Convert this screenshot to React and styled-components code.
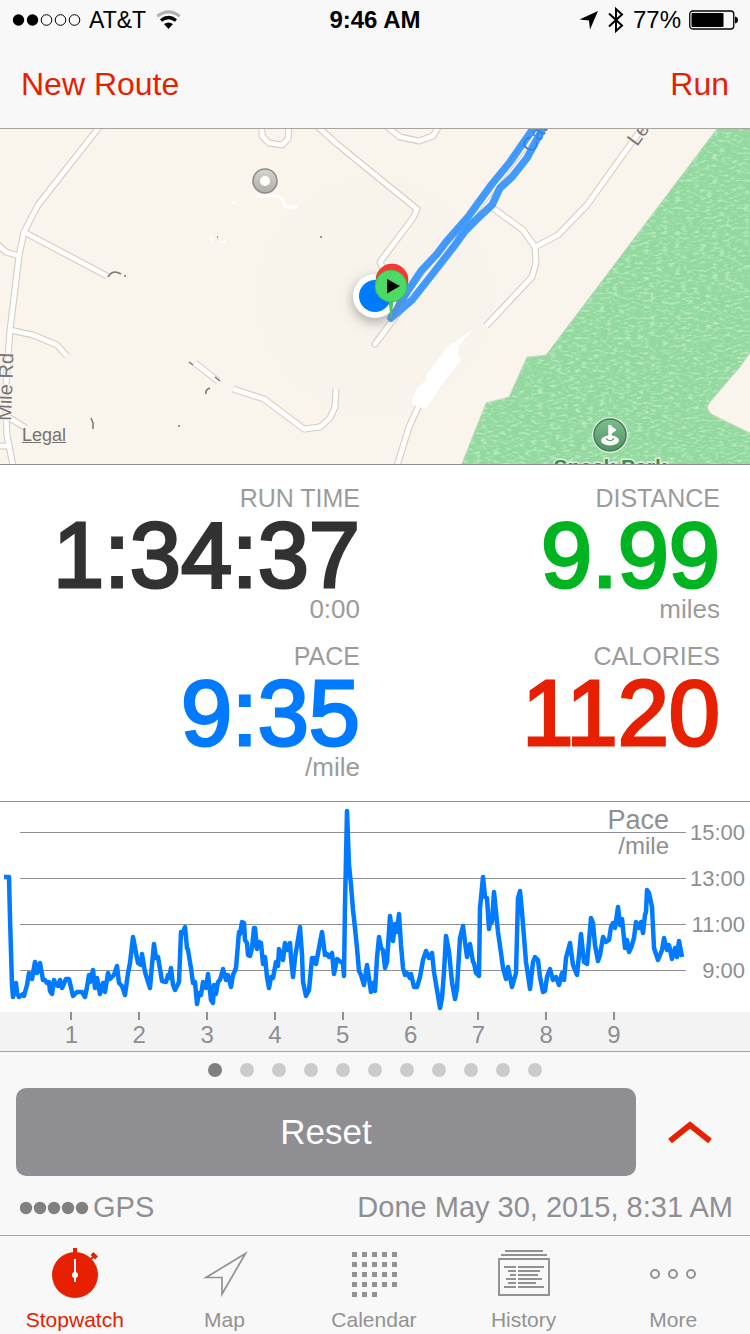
import React, { useState } from 'react'
import styled, { createGlobalStyle, css } from 'styled-components'

const RED = '#e62000'
const BLUE = '#007aff'
const GREY = '#8e8e93'

const GlobalStyle = createGlobalStyle`
  * {
    box-sizing: border-box;
  }
  body {
    margin: 0;
    background-color: #f8f8f8;
    font-family: "Liberation Sans", Arial, sans-serif;
  }
  button {
    padding: 0;
    border: 0;
    background: none;
    font-family: inherit;
    cursor: pointer;
  }
`

const Container = styled.div`
  display: flex;
  flex-direction: column;
  min-height: 100vh;
`

const StatusBar = styled.div`
  display: grid;
  grid-template-columns: 1fr auto 1fr;
  align-items: center;
  height: 40px;
  padding: 0 12px;
  color: black;
  font-size: 24px;
  & > .time {
    font-weight: bold;
  }
`

const StatusGroup = styled.div`
  display: flex;
  align-items: center;
  gap: ${props => props.$end ? '8px' : '10px'};
  ${props => props.$end && css`
    justify-content: flex-end;
  `}
  & > .carrier {
    display: flex;
    align-items: center;
    gap: 8px;
    font-size: 23px;
  }
`

const NavBar = styled.div`
  display: flex;
  justify-content: space-between;
  align-items: center;
  height: 89px;
  padding: 0 21px;
  border-bottom: 1px solid #a9a59e;
`

const NavButton = styled.button`
  color: ${RED};
  font-size: 32px;
  line-height: 40px;
`

const MapPanel = styled.div`
  position: relative;
  height: 336px;
  border-bottom: 1px solid ${GREY};
  & > svg {
    display: block;
    width: 100%;
    height: 100%;
  }
`

const LegalLink = styled.a`
  position: absolute;
  left: 22px;
  bottom: 18px;
  color: #76736e;
  font-size: 18px;
  line-height: 22px;
`

const Stats = styled.div`
  display: grid;
  grid-template-columns: 1fr 1fr;
  row-gap: 16px;
  padding: 16px 0 20px;
  background-color: white;
  border-bottom: 1px solid ${GREY};
`

const Stat = styled.div`
  display: flex;
  flex-direction: column;
  align-items: flex-end;
  padding-right: ${props => props.$last ? '30px' : '15px'};
  color: #9b9b9b;
  & > .label {
    font-size: 25px;
    line-height: 34px;
  }
  & > .value {
    color: ${props => props.color};
    font-size: 92px;
    line-height: 80px;
    -webkit-text-stroke: 3px ${props => props.color};
  }
  & > .unit {
    font-size: 26px;
    line-height: 28px;
  }
`

const Chart = styled.div`
  position: relative;
  display: flex;
  height: 210px;
  background-color: white;
  & > svg {
    flex: 1;
    min-width: 0;
    height: 210px;
  }
`

const ChartTitle = styled.div`
  position: absolute;
  top: 4px;
  right: 81px;
  color: ${GREY};
  text-align: right;
  font-size: 27px;
  line-height: 28px;
  & > .unit {
    font-size: 24px;
    line-height: 24px;
  }
`

const ScaleLabels = styled.div`
  width: 64px;
  padding: 8px 5px 0 0;
  color: ${GREY};
  text-align: right;
  font-size: 22px;
  line-height: 46px;
`

const MileAxis = styled.div`
  display: flex;
  height: 40px;
  padding-left: 5%;
  background-color: #f3f3f3;
  border-bottom: 1px solid #a4a4a8;
`

const Mile = styled.div`
  display: flex;
  flex-direction: column;
  align-items: center;
  width: 9.52%;
  color: ${GREY};
  font-size: 24px;
  line-height: 30px;
  &::before {
    content: '';
    width: 2px;
    height: 8px;
    background-color: ${GREY};
  }
`

const PageDots = styled.div`
  display: flex;
  justify-content: center;
  align-items: center;
  gap: 18px;
  height: 36px;
`

const PageDot = styled.button`
  width: 14px;
  height: 14px;
  border-radius: 50%;
  background-color: ${props => props.$active ? '#808080' : '#cbcbcb'};
`

const Actions = styled.div`
  display: flex;
  gap: 10px;
  padding: 0 16px;
`

const ResetButton = styled.button`
  flex: 1;
  height: 88px;
  border-radius: 10px;
  background-color: ${GREY};
  color: white;
  font-size: 35px;
`

const ToggleButton = styled.button`
  display: flex;
  justify-content: center;
  align-items: center;
  width: 88px;
`

const InfoRow = styled.div`
  display: flex;
  justify-content: space-between;
  align-items: center;
  height: 60px;
  padding: 4px 17px 0 20px;
  border-bottom: 1px solid #a4a4a8;
  color: ${GREY};
  font-size: 29px;
`

const Signal = styled.div`
  display: flex;
  align-items: center;
  gap: 4px;
`

const TabBar = styled.nav`
  display: flex;
  padding: 12px 2px 0 0;
`

const Tab = styled.button`
  flex: 1;
  display: flex;
  flex-direction: column;
  align-items: center;
  gap: 7px;
  color: ${props => props.$active ? RED : '#929292'};
  font-size: 21px;
  line-height: 26px;
`

const roads = [
  'M100 126L38 205L24 232L19 256L10 330L5 400L7 435L13 466',
  'M24 232L107 276',
  'M-2 245L6 252L19 256',
  'M10 330L33 335L57 345L67 356',
  'M8 417L26 428',
  'M-2 446L8 446',
  'M262 126L262 136L269 143L282 145L288 139L289 126',
  'M317 126L337 144L375 175L417 209L413 218L380 262L386 275',
  'M386 126L400 137L419 141L433 136L439 126',
  'M645 124L587 205L558 235L535 247L536 263L532 277L486 326',
  'M490 206L523 230L535 247',
  'M375 344L405 304L540 126',
  'M420 403L409 427L397 466',
  'M233 389L264 399L304 429L320 427L330 418L335 407L336 389',
  'M195 363L218 381',
]

const routes = [
  'M535 126L510 162L492 184L468 217L446 242L437 254L421 271L407 292L391 318',
  'M544 126L527 158L512 177L500 188L492 205L478 218L465 231L455 245L434 272L412 300L391 318',
]

const park = 'M719 126L546 355L527 357L509 397L486 403L461 466L752 466L752 434L713 415Q704 409 710 402L740 367L752 350L752 126Z'

const pace = [
  [4, 75], [9, 75], [10, 116], [12, 183], [13, 195], [16, 181], [17, 191], [19, 195], [23, 192], [24, 194],
  [27, 183], [29, 171], [32, 177], [35, 160], [37, 171], [40, 161], [43, 178], [45, 178], [47, 181], [49, 180],
  [50, 189], [52, 192], [54, 178], [56, 183], [58, 184], [60, 178], [62, 186], [66, 177], [69, 177], [73, 194],
  [77, 190], [82, 190], [85, 195], [87, 185], [89, 173], [90, 180], [93, 168], [95, 186], [97, 176], [100, 192],
  [103, 181], [105, 190], [108, 171], [110, 177], [114, 173], [117, 164], [119, 181], [122, 184], [125, 193],
  [128, 171], [130, 161], [133, 135], [136, 151], [138, 161], [141, 163], [142, 152], [145, 170], [150, 186],
  [152, 163], [154, 142], [156, 156], [158, 155], [162, 179], [166, 180], [168, 173], [169, 176], [171, 166],
  [173, 183], [175, 188], [179, 180], [181, 130], [183, 131], [185, 125], [187, 146], [188, 148], [191, 166],
  [193, 181], [195, 180], [197, 202], [199, 191], [201, 193], [203, 180], [206, 186], [208, 172], [211, 198],
  [213, 201], [214, 183], [216, 192], [218, 180], [220, 178], [223, 167], [226, 178], [228, 173], [231, 185],
  [233, 173], [236, 166], [239, 130], [240, 132], [242, 120], [244, 121], [245, 138], [247, 141], [248, 153],
  [250, 154], [252, 146], [254, 126], [255, 126], [257, 147], [259, 140], [261, 141], [263, 162], [265, 155],
  [267, 175], [269, 186], [271, 175], [273, 176], [276, 160], [278, 164], [279, 147], [283, 158], [285, 141],
  [287, 148], [290, 141], [291, 156], [293, 175], [295, 156], [300, 125], [302, 153], [303, 180], [306, 194],
  [309, 188], [312, 156], [314, 156], [316, 162], [319, 146], [322, 130], [325, 153], [327, 152], [329, 155],
  [332, 151], [334, 172], [337, 157], [341, 160], [343, 162], [344, 174], [345, 103], [347, 9], [349, 63],
  [351, 83], [353, 108], [355, 126], [357, 146], [359, 169], [361, 173], [364, 183], [367, 163], [371, 190],
  [373, 181], [375, 189], [377, 156], [379, 135], [381, 146], [383, 148], [385, 166], [387, 160], [390, 114],
  [393, 139], [395, 122], [397, 130], [399, 112], [401, 143], [403, 166], [405, 173], [407, 171], [410, 176],
  [411, 172], [414, 185], [417, 185], [420, 175], [423, 158], [426, 149], [429, 156], [432, 151], [434, 170],
  [437, 188], [440, 206], [442, 196], [444, 170], [446, 134], [449, 150], [452, 180], [455, 197], [457, 186],
  [460, 136], [463, 124], [465, 140], [467, 155], [470, 142], [473, 160], [474, 161], [476, 171], [479, 174],
  [480, 106], [483, 75], [485, 95], [487, 96], [489, 127], [491, 115], [492, 120], [494, 90], [496, 110],
  [498, 130], [501, 151], [503, 166], [506, 177], [508, 165], [512, 185], [516, 171], [518, 96], [520, 89],
  [522, 110], [526, 160], [528, 173], [530, 187], [533, 160], [535, 155], [538, 158], [540, 175], [543, 190],
  [545, 189], [547, 175], [550, 167], [553, 178], [556, 175], [559, 183], [562, 171], [564, 178], [566, 156],
  [570, 141], [573, 163], [577, 173], [579, 153], [581, 132], [584, 160], [587, 162], [591, 116], [593, 121],
  [595, 143], [598, 159], [600, 153], [603, 135], [606, 140], [609, 138], [611, 125], [613, 121], [615, 126],
  [618, 105], [620, 123], [622, 117], [625, 146], [627, 138], [629, 150], [631, 146], [634, 136], [636, 120],
  [639, 126], [641, 120], [643, 131], [645, 113], [646, 110], [647, 88], [649, 91], [652, 105], [654, 146],
  [658, 158], [662, 148], [664, 136], [667, 148], [669, 143], [672, 157], [675, 146], [677, 155], [679, 139],
  [682, 155],
]

const stats = [
  { label: 'RUN TIME', value: '1:34:37', unit: '0:00', color: '#323232' },
  { label: 'DISTANCE', value: '9.99', unit: 'miles', color: '#00b421' },
  { label: 'PACE', value: '9:35', unit: '/mile', color: BLUE },
  { label: 'CALORIES', value: '1120', unit: '', color: RED },
]

const SignalDots = ({ filled }) => (
  <svg width="69" height="14">
    {[0, 1, 2, 3, 4].map(i => (
      <circle key={i} cx={6.5 + i * 14} cy="7" r={i < filled ? 5.7 : 5.3} fill={i < filled ? 'black' : 'none'} stroke="black" strokeWidth={i < filled ? 0 : 1} />
    ))}
  </svg>
)

const WifiIcon = () => (
  <svg width="25" height="20" viewBox="0 0 25 20" fill="none">
    <path d="M1.2 6.200Q12.500 -2.500 23.800 6.200" stroke="#b0b0b0" strokeWidth="3" />
    <path d="M5 10.500Q12.500 4.500 20 10.500" stroke="black" strokeWidth="3.200" />
    <path d="M12.500 19L8 14Q12.500 10.800 17 14Z" fill="black" />
  </svg>
)

const LocationIcon = () => (
  <svg width="20" height="20" viewBox="0 0 20 20">
    <path d="M19 1L0.500 9.500L10 10.400L11 19.500Z" fill="black" />
  </svg>
)

const BluetoothIcon = () => (
  <svg width="18" height="28" viewBox="0 0 18 28" fill="none" stroke="black" strokeWidth="2">
    <path d="M2 7.500L15 19.500L9 25V3L15 8.500L2 20.500" />
  </svg>
)

const BatteryIcon = () => (
  <svg width="49" height="20" viewBox="0 0 49 20">
    <rect x="0.750" y="1" width="44" height="18" rx="3" fill="none" stroke="black" strokeWidth="1.300" />
    <rect x="2.500" y="3" width="32" height="14" rx="1" fill="black" />
    <path d="M46 6.500Q49 7 49 10Q49 13 46 13.500Z" fill="black" />
  </svg>
)

const StopwatchIcon = () => (
  <svg width="52" height="52" viewBox="0 0 52 52">
    <circle cx="26" cy="27" r="23" fill={RED} />
    <path d="M24 0H28V6H24Z" fill={RED} />
    <path d="M42 11L45 8" stroke={RED} strokeWidth="2" />
    <path d="M43 5.500L47.500 10" stroke={RED} strokeWidth="4" />
    <path d="M26 11V34" stroke="white" strokeWidth="2" />
    <circle cx="26" cy="27" r="3" fill="white" />
  </svg>
)

const MapIcon = () => (
  <svg width="52" height="52" viewBox="0 0 52 52">
    <path d="M47.500 5.500L8 29.500H24V46Z" fill="none" stroke="#929292" strokeWidth="1.700" strokeMiterlimit="10" />
  </svg>
)

const CalendarIcon = () => (
  <svg width="52" height="52" viewBox="0 0 52 52" fill="#929292">
    {Array.from({ length: 23 }, (_, i) => (
      <rect key={i} x={4 + (i % 5) * 10} y={4 + Math.floor(i / 5) * 10} width="5" height="5" />
    ))}
  </svg>
)

const HistoryIcon = () => (
  <svg width="52" height="52" viewBox="0 0 52 52" fill="none" stroke="#929292" strokeWidth="2">
    <path d="M7 3H45M3 7H49" />
    <rect x="1" y="11" width="50" height="36" />
    <path d="M6 19H18M10 23H18M12 27H18M8 31H18M10 35H18M6 39H18" />
    <path d="M20 19H46M20 23H42M20 27H40M20 31H44M20 35H38M20 39H46" />
  </svg>
)

const MoreIcon = () => (
  <svg width="52" height="52" viewBox="0 0 52 52" fill="none" stroke="#929292" strokeWidth="2">
    <circle cx="8" cy="26" r="4" />
    <circle cx="26" cy="26" r="4" />
    <circle cx="44" cy="26" r="4" />
  </svg>
)

const tabs = [
  { name: 'Stopwatch', Icon: StopwatchIcon },
  { name: 'Map', Icon: MapIcon },
  { name: 'Calendar', Icon: CalendarIcon },
  { name: 'History', Icon: HistoryIcon },
  { name: 'More', Icon: MoreIcon },
]

const RouteMap = () => (
  <svg viewBox="0 129 750 335" preserveAspectRatio="xMidYMid slice">
    <defs>
      <filter id="grass" x="0" y="0" width="100%" height="100%" colorInterpolationFilters="sRGB">
        <feTurbulence type="fractalNoise" baseFrequency="0.16 0.4" numOctaves="3" seed="4" />
        <feColorMatrix values="0 0 0 0 0.72  0 0 0 0 0.92  0 0 0 0 0.75  3.500 0 0 0 -1.700" />
      </filter>
      <filter id="glow" x="-50%" y="-50%" width="200%" height="200%">
        <feGaussianBlur stdDeviation="6" />
      </filter>
      <clipPath id="park">
        <path d={park} />
      </clipPath>
      <linearGradient id="silver" x1="0" y1="0" x2="0" y2="1">
        <stop offset="0" stopColor="#d6d4cf" />
        <stop offset="1" stopColor="#b0aea8" />
      </linearGradient>
      <linearGradient id="golf" x1="0" y1="0" x2="0" y2="1">
        <stop offset="0" stopColor="#7dbd8d" />
        <stop offset="1" stopColor="#4f9463" />
      </linearGradient>
    </defs>
    <rect y="129" width="750" height="335" fill="#f9f5ed" />
    <path d={park} fill="#93d99f" stroke="#cfd6c0" />
    <g clipPath="url(#park)">
      <rect x="455" y="129" width="295" height="335" filter="url(#grass)" />
    </g>
    <circle cx="375" cy="296" r="118" fill="#8c8c78" fillOpacity="0.012" />
    <g fill="none" strokeLinejoin="round">
      {roads.map(d => <path key={d} d={d} stroke="#d6cdc2" strokeWidth="7" />)}
      {roads.map(d => <path key={d} d={d} stroke="white" strokeWidth="4.800" />)}
      <path d="M375 344L380 337" stroke="#d6cdc2" strokeWidth="7" strokeLinecap="round" />
      <path d="M375 344L382 335" stroke="white" strokeWidth="4.800" strokeLinecap="round" />
      <path d="M257 196H276Q284 197 285 207H297" stroke="white" strokeWidth="3" />
      <path d="M210 237l3 4M220 242h6M232 203l4 -1" stroke="white" strokeWidth="2" />
      <path d="M108 277Q112 269 121 274M124 276h2M91 418l2 5v6M178 426h2M189 362l4 3M215 377l5 4M210 388q-5 2 -4 6M320 237h2M217 237h1" stroke="#77756f" strokeWidth="1.500" />
    </g>
    <path d="M474 329L459 345L458 352L460 361L441 386L426 409L413 405L412 399L418 387L427 380L426 375L449 345L455 342Z" fill="white" />
    <g fill="#77757a" fontSize="20" stroke="#f9f5ed" strokeWidth="2" paintOrder="stroke">
      <text transform="translate(11 421) rotate(-88)">Mile Rd</text>
      <text transform="translate(637 147) rotate(-54)">Le</text>
      <text transform="translate(532 154) rotate(-57)">Can</text>
    </g>
    <g fill="none" stroke="#1c86ff" strokeOpacity="0.820" strokeWidth="7.500" strokeLinejoin="round" strokeLinecap="round">
      <path d={routes.join('')} />
    </g>
    <circle cx="265" cy="181" r="12" fill="url(#silver)" stroke="#8d8b87" strokeWidth="1.500" />
    <circle cx="265" cy="181" r="5" fill="white" />
    <circle cx="610" cy="435" r="18" fill="#dff0df" />
    <circle cx="610" cy="435" r="16" fill="url(#golf)" stroke="#457d55" strokeWidth="1.500" />
    <ellipse cx="610" cy="440.500" rx="9" ry="5" fill="white" />
    <path d="M609 440V425L616 430L611 433.500V440Z" fill="white" stroke="white" />
    <path d="M606 438.500Q610 443 614 438.500" fill="none" stroke="#5d9f70" strokeWidth="1.200" />
    <path d="M610 425V440" stroke="white" strokeWidth="3" />
    <text x="610" y="474" textAnchor="middle" fontSize="21" fontWeight="bold" fill="#3f8a55" stroke="#dff2df" strokeWidth="3" paintOrder="stroke">Speck Park</text>
    <circle cx="375" cy="300" r="23" fill="#777" fillOpacity="0.550" filter="url(#glow)" />
    <circle cx="375" cy="296" r="22" fill="white" />
    <circle cx="375" cy="296" r="16" fill={BLUE} />
    <circle cx="392" cy="280" r="16" fill="#ff3530" stroke="#d8322c" strokeWidth="0.800" />
    <path d="M388.500 300H393.500L391.500 318H390.500Z" fill="#46c95d" />
    <circle cx="391" cy="286" r="16" fill="#4cd964" stroke="#3fae52" strokeWidth="0.800" />
    <path d="M387 279L400 286L387 293.500Z" fill="black" />
  </svg>
)

export default function App() {
  const [page, setPage] = useState(0)
  const [tab, setTab] = useState('Stopwatch')

  const renderStatusBar = () => {
    return <StatusBar>
      <StatusGroup>
        <span className="carrier">
          <SignalDots filled={2} />
          AT&amp;T
        </span>
        <WifiIcon />
      </StatusGroup>
      <span className="time">9:46 AM</span>
      <StatusGroup $end>
        <LocationIcon />
        <BluetoothIcon />
        <span>77%</span>
        <BatteryIcon />
      </StatusGroup>
    </StatusBar>
  }

  const renderChart = () => {
    return <>
      <Chart>
        <svg viewBox="0 0 686 210" preserveAspectRatio="none">
          <path d="M20 30.500H686M20 76.500H686M20 122.500H686M20 168.500H686" stroke={GREY} vectorEffect="non-scaling-stroke" />
          <polyline points={pace.join(' ')} fill="none" stroke={BLUE} strokeWidth="4.500" strokeLinejoin="round" vectorEffect="non-scaling-stroke" />
        </svg>
        <ScaleLabels>
          {['15:00', '13:00', '11:00', '9:00'].map(label => <div key={label}>{label}</div>)}
        </ScaleLabels>
        <ChartTitle>
          <div>Pace</div>
          <div className="unit">/mile</div>
        </ChartTitle>
      </Chart>
      <MileAxis>
        {[1, 2, 3, 4, 5, 6, 7, 8, 9].map(mile => <Mile key={mile}>{mile}</Mile>)}
      </MileAxis>
    </>
  }

  const renderControls = () => {
    return <>
      <PageDots>
        {Array.from({ length: 11 }, (_, i) => (
          <PageDot key={i} $active={i === page} aria-label={`Page ${i + 1}`} onClick={() => setPage(i)} />
        ))}
      </PageDots>
      <Actions>
        <ResetButton>Reset</ResetButton>
        <ToggleButton aria-label="Expand">
          <svg width="46" height="26" viewBox="0 0 46 26">
            <path d="M3 22L23 6L43 22" fill="none" stroke={RED} strokeWidth="6" />
          </svg>
        </ToggleButton>
      </Actions>
      <InfoRow>
        <Signal>
          <svg width="69" height="14" fill="#808080">
            {[6, 20, 34, 48, 62].map(x => <circle key={x} cx={x} cy="7" r="6.200" />)}
          </svg>
          GPS
        </Signal>
        <span>Done May 30, 2015, 8:31 AM</span>
      </InfoRow>
    </>
  }

  return (
    <Container>
      <GlobalStyle />
      {renderStatusBar()}
      <NavBar>
        <NavButton>New Route</NavButton>
        <NavButton>Run</NavButton>
      </NavBar>
      <MapPanel>
        <RouteMap />
        <LegalLink href="#legal">Legal</LegalLink>
      </MapPanel>
      <Stats>
        {stats.map((stat, i) => (
          <Stat key={stat.label} color={stat.color} $last={i % 2 === 1}>
            <span className="label">{stat.label}</span>
            <span className="value">{stat.value}</span>
            <span className="unit">{stat.unit}</span>
          </Stat>
        ))}
      </Stats>
      {renderChart()}
      {renderControls()}
      <TabBar>
        {tabs.map(({ name, Icon }) => (
          <Tab key={name} $active={name === tab} onClick={() => setTab(name)}>
            <Icon />
            {name}
          </Tab>
        ))}
      </TabBar>
    </Container>
  )
}
